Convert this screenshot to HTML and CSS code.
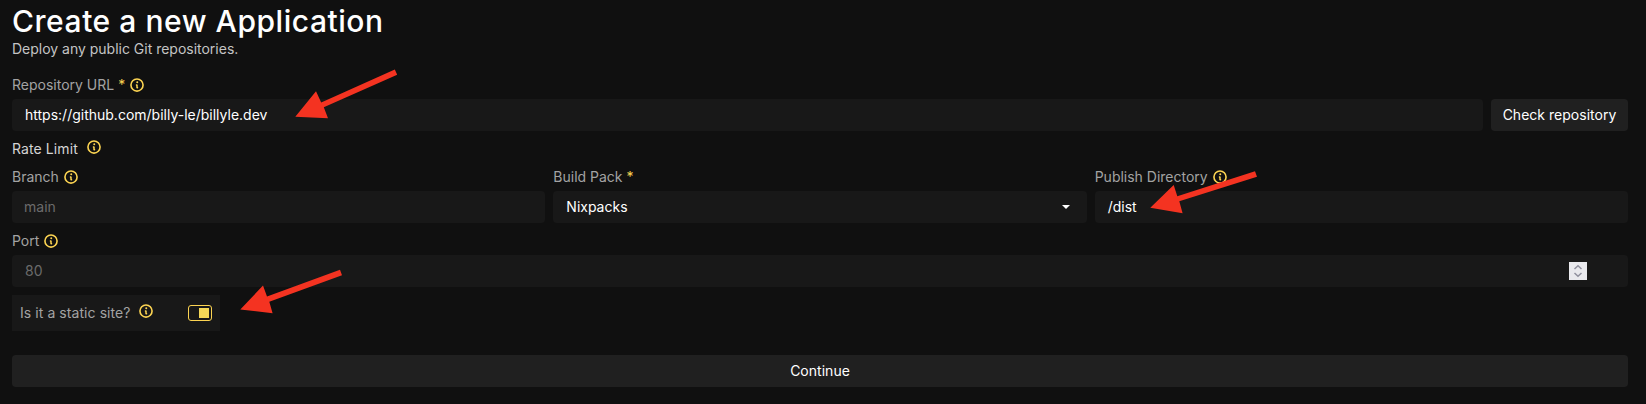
FILE: index.html
```html
<!DOCTYPE html>
<html lang="en">
<head>
<meta charset="utf-8">
<title>Create a new Application</title>
<link rel="stylesheet" href="styles.css">
</head>
<body>
<svg class="defs" width="0" height="0">
  <symbol id="info" viewBox="0 0 256 256"><path fill="currentColor" d="M128 18a110 110 0 1 0 110 110A110 110 0 0 0 128 18Zm0 194a84 84 0 1 1 84-84a84.09 84.09 0 0 1-84 84Zm-12-128a16 16 0 1 1 16 16a16 16 0 0 1-16-16Zm32 88a12 12 0 0 1-12 12h-4a16 16 0 0 1-16-16v-29.400a12 12 0 0 1 0-22.600h8a16 16 0 0 1 16 16v28.400a12 12 0 0 1 8 11.600Z"/></symbol>
</svg>
<main class="page">
  <h1 class="title">Create a new Application</h1>
  <p class="subtitle">Deploy any public Git repositories.</p>
  <form class="form">
    <div class="repo-row">
      <div class="field">
        <div class="label"><span>Repository URL</span><b class="required">*</b><svg class="info"><use href="#info"/></svg></div>
        <div class="input">https://github.com/billy-le/billyle.dev</div>
      </div>
      <button class="button" type="button">Check repository</button>
    </div>
    <div class="rate"><span>Rate Limit</span><svg class="info raised"><use href="#info"/></svg></div>
    <div class="columns">
      <div class="field">
        <div class="label"><span>Branch</span><svg class="info"><use href="#info"/></svg></div>
        <div class="input placeholder branch">main</div>
      </div>
      <div class="field">
        <div class="label"><span>Build Pack</span><b class="required">*</b></div>
        <div class="input select"><span>Nixpacks</span><svg class="caret" viewBox="0 0 8 4"><path fill="#fff" d="M0 0h8L4 4z"/></svg></div>
      </div>
      <div class="field">
        <div class="label"><span>Publish Directory</span><svg class="info"><use href="#info"/></svg></div>
        <div class="input">/dist</div>
      </div>
    </div>
    <div class="field port">
      <div class="label"><span>Port</span><svg class="info"><use href="#info"/></svg></div>
      <div class="input placeholder number"><span>80</span><svg class="stepper" viewBox="0 0 18 18"><path d="M5.500 7 9 3.800 12.500 7M5.500 11 9 14.200 12.500 11"/></svg></div>
    </div>
    <div class="static"><span>Is it a static site?</span><svg class="info raised"><use href="#info"/></svg><span class="toggle"></span></div>
    <button class="button continue" type="button">Continue</button>
  </form>
  <svg class="arrows" viewBox="0 0 1646 404">
    <path d="M295.300 116.800 316 91.300 321.200 102.600 394.800 69.600 397.200 74.800 323.800 107.300 328 118.300Z"/>
    <path d="M1150.300 207.800 1173.700 185 1177.300 196.300 1255 171.300 1257 176.700 1179.300 201.300 1182.600 213.200Z"/>
    <path d="M240.300 309.500 263 285.500 267 296.500 340 269.700 342 275.200 269.300 301.800 272.600 313.200Z"/>
  </svg>
</main>
</body>
</html>
```
FILE: styles.css
```css
* { box-sizing: border-box; }
body { margin: 0; background: #101010; font: 14px/20px Inter, sans-serif; color: #a3a3a3; }
.defs { position: absolute; }
.page { position: relative; height: 404px; padding: 3px 18px 0 12px; overflow: hidden; }
.title { margin: 0; font-size: 30px; line-height: 36px; font-weight: 500; letter-spacing: .54px; color: #fff; }
.subtitle { margin: 0; letter-spacing: -.01px; color: #c4c4c4; }
.form { display: flex; flex-direction: column; padding-top: 16px; }
.repo-row { display: flex; align-items: flex-end; gap: 8px; }
.repo-row .field { flex: 1; }
.label { display: flex; align-items: center; gap: 4px; height: 20px; margin-bottom: 4px; }
.required { color: #fcd452; font-weight: 400; }
.info { width: 16px; height: 16px; color: #fcd452; flex: none; }
.input { display: flex; align-items: center; height: 32px; padding: 0 13px; border-radius: 4px; background: #181818; color: #fff; }
.placeholder { color: #6b6b6b; }
.branch { padding-left: 12px; }
.button { width: 137px; height: 32px; border: 0; border-radius: 4px; background: #202020; color: #fff; font: inherit; letter-spacing: .02px; padding: 0; }
.rate { display: flex; align-items: center; gap: 8px; height: 20px; margin-top: 8px; letter-spacing: .1px; color: #d4d4d4; }
.raised { margin: 0 0 4px; }
.columns { display: grid; grid-template-columns: repeat(3, 1fr); gap: 8px; margin-top: 8px; }
.select { justify-content: space-between; padding-right: 17px; }
.caret { width: 8px; height: 4px; }
.port { margin-top: 8px; }
.number { justify-content: space-between; padding-right: 41px; }
.stepper { width: 18px; height: 18px; background: #e9e9ed; fill: none; stroke: #8f8f9d; stroke-width: 1.500; }
.static { display: flex; align-items: center; gap: 7px; width: 208px; height: 36px; margin-top: 8px; padding: 0 8px; background: #181818; letter-spacing: .07px; }
.toggle { width: 24px; height: 16px; margin-left: auto; border: 1px solid #fcd452; border-radius: 3px; padding: 2px 2px 2px 10px; background: #101010 linear-gradient(#f4d757, #f4d757) content-box no-repeat; }
.continue { width: 100%; margin-top: 24px; }
.arrows { position: absolute; left: 0; top: 0; width: 1646px; height: 404px; fill: #f43321; pointer-events: none; }
```
